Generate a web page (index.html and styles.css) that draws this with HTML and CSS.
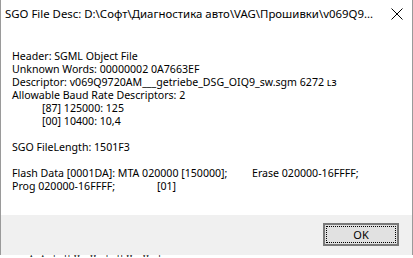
FILE: index.html
```html
<!DOCTYPE html>
<html>
<head>
<meta charset="utf-8">
<link rel="stylesheet" href="styles.css">
</head>
<body>
<div class="window">
  <div class="titlebar">
    <span class="title">SGO File Desc: D:\Софт\Диагностика авто\VAG\Прошивки\v069Q9...</span>
    <svg class="close" width="12" height="12" viewBox="0 0 12 12"><path d="M0.5 0.5 L11.5 11.5 M11.5 0.5 L0.5 11.5" stroke="#000" stroke-width="1" fill="none"/></svg>
  </div>
  <div class="client">
    <div class="msg">
      <div class="line">Header: SGML Object File</div>
      <div class="line">Unknown Words: 00000002 0A7663EF</div>
      <div class="line">Descriptor: v069Q9720AM___getriebe_DSG_OIQ9_sw.sgm 6272 ʟз</div>
      <div class="line">Allowable Baud Rate Descriptors: 2</div>
      <div class="line indent">[87] 125000: 125</div>
      <div class="line indent">[00] 10400: 10,4</div>
      <div class="line"></div>
      <div class="line">SGO FileLength: 1501F3</div>
      <div class="line"></div>
      <div class="line"><span class="col1">Flash Data [0001DA]: MTA 020000 [150000];</span>Erase 020000-16FFFF;</div>
      <div class="line"><span class="col2">Prog 020000-16FFFF;</span>[01]</div>
    </div>
  </div>
  <div class="footer">
    <button class="ok"><span class="focus">OK</span></button>
  </div>
</div>
<div class="backdrop"><span>ᶦ ᶦ ˡ ᴴᵂ ᵂ ˡ ᴴᵂ ᵂ ˡ</span></div>
</body>
</html>
```
FILE: styles.css
```css
* { box-sizing: border-box; }
html, body { margin: 0; padding: 0; }
body {
  width: 413px;
  height: 258px;
  overflow: hidden;
  background: #ffffff;
  font-family: "Noto Sans", "Open Sans", sans-serif;
  font-size: 12px;
  color: #000;
}
.window {
  width: 413px;
  height: 255px;
  border-left: 1px solid #9a9a9a;
  border-right: 1px solid #9a9a9a;
  display: flex;
  flex-direction: column;
  background: #fff;
}
.titlebar {
  height: 30px;
  display: flex;
  align-items: center;
  padding-left: 4px;
  padding-right: 8px;
  justify-content: space-between;
}
.title {
  font-size: 11.4px;
  white-space: nowrap;
  line-height: 16px;
  margin-top: -2px;
}
.close {
  margin-right: 1px;
  margin-top: -2px;
}
.client {
  flex: 1;
  padding: 20px 0 0 11px;
}
.msg {
  font-size: 10.6px;
}
.line {
  height: 13px;
  line-height: 13px;
  white-space: nowrap;
}
.indent { padding-left: 30px; }
.col1 { display: inline-block; width: 240px; }
.col2 { display: inline-block; width: 145px; }
.footer {
  height: 40px;
  background: #f0f0f0;
  display: flex;
  justify-content: flex-end;
  align-items: flex-start;
  padding: 8px 13px 0 0;
}
.ok {
  width: 76px;
  height: 23px;
  border: 2px solid #7a7a7a;
  background: #e1e1e1;
  padding: 1px;
  font-family: inherit;
  font-size: 11px;
  display: flex;
}
.focus {
  flex: 1;
  border: 1px dotted #000;
  display: flex;
  align-items: center;
  justify-content: center;
  line-height: 12px;
}
.backdrop {
  height: 3px;
  overflow: hidden;
  padding-left: 30px;
  font-size: 12px;
  line-height: 3px;
  color: #000;
  letter-spacing: 3px;
}
```
